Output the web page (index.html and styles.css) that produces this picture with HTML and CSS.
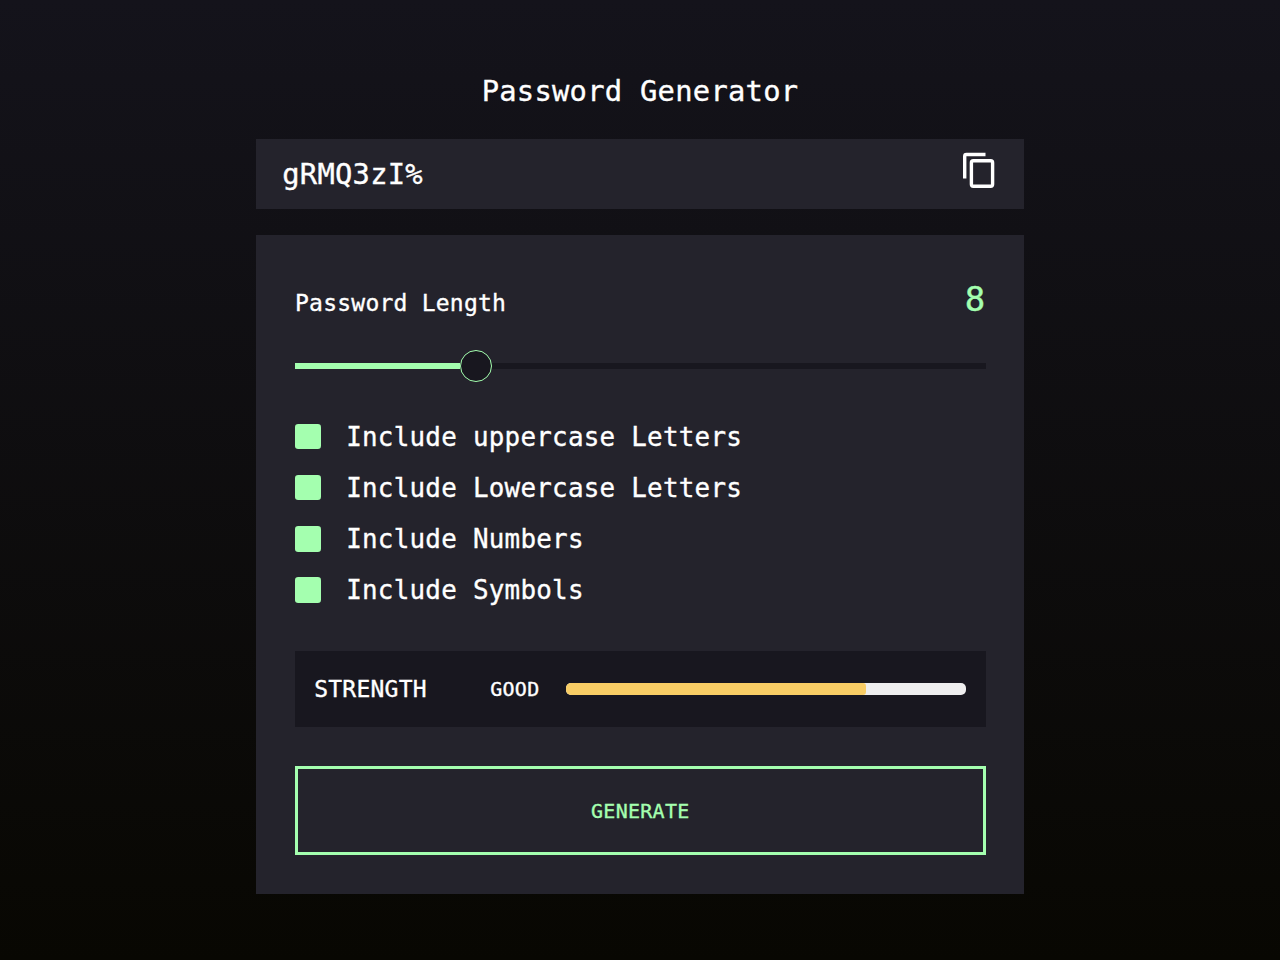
FILE: index.html
```html
<!DOCTYPE html>
<html lang="en">
<head>
<meta charset="utf-8">
<title>Password Generator</title>
<link rel="stylesheet" href="styles.css">
</head>
<body>
<main class="generator">
  <h1 class="title">Password Generator</h1>
  <section class="display">
    <span class="password">gRMQ3zI%</span>
    <button class="copy" aria-label="Copy password">
      <svg class="copy-icon" width="38" height="40" viewBox="0 0 38 40" fill="none" stroke="#fff" stroke-width="3.4">
        <path d="M3.7 27.5V5.2Q3.7 3.5 5.4 3.5H24.5"/>
        <rect x="10.4" y="9.8" width="21.2" height="25.4" rx="1.9"/>
      </svg>
    </button>
  </section>
  <section class="panel">
    <div class="length">
      <span class="length-label">Password Length</span>
      <span class="length-value">8</span>
    </div>
    <div class="slider">
      <span class="slider-fill"></span>
      <span class="slider-thumb"></span>
      <span class="slider-rest"></span>
    </div>
    <ul class="options">
      <li class="option"><span class="check"></span>Include uppercase Letters</li>
      <li class="option"><span class="check"></span>Include Lowercase Letters</li>
      <li class="option"><span class="check"></span>Include Numbers</li>
      <li class="option"><span class="check"></span>Include Symbols</li>
    </ul>
    <div class="strength">
      <span class="strength-title">STRENGTH</span>
      <span class="strength-level">GOOD</span>
      <div class="meter"><div class="meter-fill" style="width:75%"></div></div>
    </div>
    <button class="generate">GENERATE</button>
  </section>
</main>
</body>
</html>
```
FILE: styles.css
```css
* { box-sizing: border-box; }

body {
  margin: 0;
  height: 960px;
  overflow: hidden;
  background: linear-gradient(180deg, #14131b 0%, #080702 100%);
  color: #fff;
  font-family: "DejaVu Sans Mono", "Liberation Mono", monospace;
  -webkit-text-stroke: 0.35px currentColor;
}

button {
  padding: 0;
  border: 0;
  background: none;
  color: inherit;
  font-family: inherit;
}

.generator {
  width: 768px;
  margin: 0 auto;
  padding-top: 73px;
}

.title {
  margin: 0 0 29.6px;
  text-align: center;
  font-size: 28.8px;
  font-weight: 400;
  line-height: 36px;
  letter-spacing: 0.26px;
}

.display {
  display: flex;
  justify-content: space-between;
  height: 70.4px;
  margin-bottom: 25.6px;
  padding: 0 25.6px 0 26.2px;
  background: #24232c;
}

.password {
  font-size: 28.8px;
  line-height: 71px;
  letter-spacing: 0.26px;
}

.copy {
  display: flex;
  align-self: flex-start;
  margin: 12.8px -0.4px 0 0;
}

.copy-icon { display: block; }

.panel {
  height: 659px;
  padding: 44px 38.4px 38.4px 39px;
  background: #24232c;
}

.length {
  display: flex;
  justify-content: space-between;
  height: 50px;
}

.length-label {
  font-size: 23px;
  line-height: 48px;
  letter-spacing: 0.23px;
}

.length-value {
  color: #a4ffaf;
  font-size: 34px;
  line-height: 40px;
  letter-spacing: 0.4px;
}

.slider {
  display: flex;
  align-items: center;
  height: 32px;
  margin-top: 21px;
}

.slider-fill {
  width: 165px;
  height: 6px;
  background: #a4ffaf;
}

.slider-thumb {
  width: 32px;
  height: 32px;
  border: 1px solid #a4ffaf;
  border-radius: 50%;
  background: #18171f;
}

.slider-rest {
  flex: 1;
  height: 6px;
  background: #18171f;
}

.options {
  display: grid;
  row-gap: 25.6px;
  margin: 42px 0 48px;
  padding: 0;
  list-style: none;
}

.option {
  display: flex;
  gap: 25.6px;
  height: 25.6px;
  font-size: 25.9px;
  line-height: 27px;
  letter-spacing: 0.25px;
}

.check {
  width: 25.6px;
  height: 25.6px;
  border-radius: 3.2px;
  background: #a4ffaf;
}

.strength {
  display: flex;
  align-items: center;
  height: 76.4px;
  padding: 0 19.2px;
  background: #18171f;
}

.strength-title {
  width: 176px;
  font-size: 23px;
  letter-spacing: 0.23px;
}

.strength-level {
  width: 75.4px;
  font-size: 20px;
  letter-spacing: 0.28px;
}

.meter {
  flex: 1;
  height: 12.8px;
  overflow: hidden;
  border-radius: 5px;
  background: #eee;
}

.meter-fill {
  height: 100%;
  border-radius: 3.2px;
  background: #f8cd65;
}

.generate {
  display: block;
  width: 100%;
  height: 89.2px;
  margin-top: 38.4px;
  padding-top: 2px;
  border: 3px solid #a4ffaf;
  color: #a4ffaf;
  font-size: 20px;
  letter-spacing: 0.28px;
}
```
